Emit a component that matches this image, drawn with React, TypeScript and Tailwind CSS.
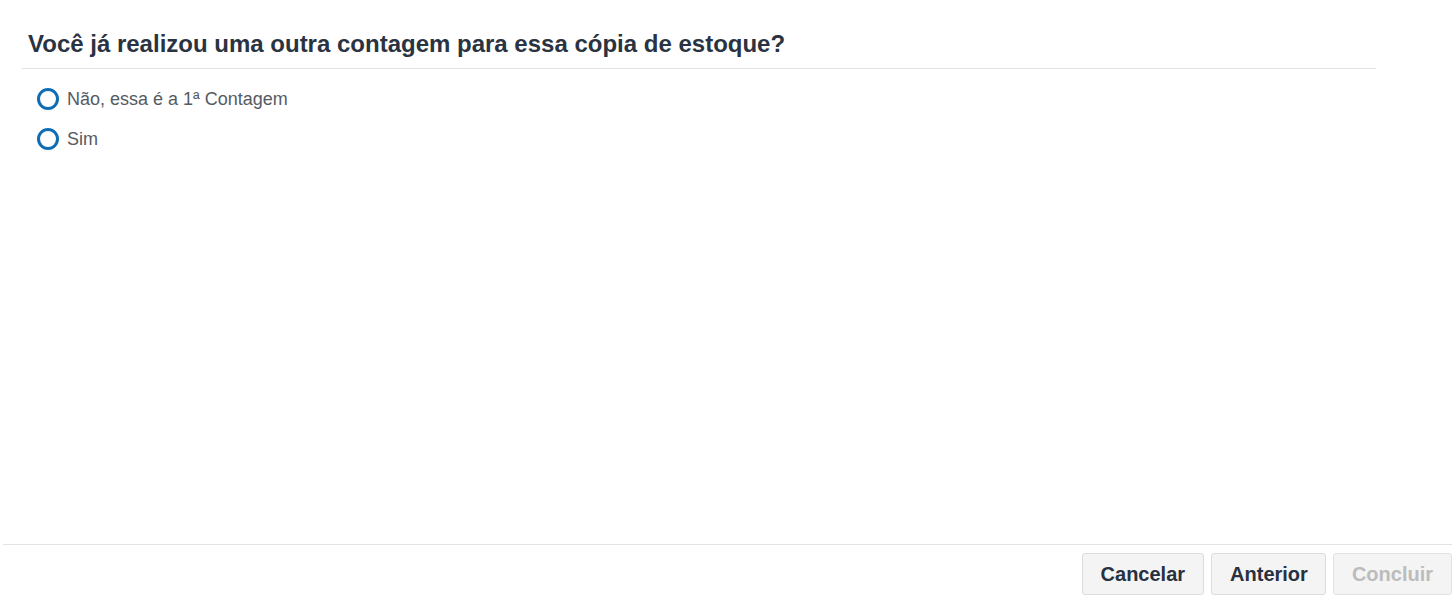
import React, { useState } from "react";

const options = [
  { id: "primeira", label: "Não, essa é a 1ª Contagem" },
  { id: "sim", label: "Sim" },
];

export default function App() {
  const [selected, setSelected] = useState<string | null>(null);

  return (
    <div className="h-[596px] w-full bg-white flex flex-col font-['Liberation_Sans',Arial,sans-serif] overflow-hidden">
      {/* QUESTION */}
      <div className="pl-[22px] pr-[79px]">
        <div className="border-b border-[#e3e3e3] pl-[6px] pt-[30px] pb-[10px]">
          <h2 className="text-[24px] leading-[28px] font-bold text-[#2a3341]">
            Você já realizou uma outra contagem para essa cópia de estoque?
          </h2>
        </div>

        <div className="pl-[15px] pt-[19px] flex flex-col gap-[18px]">
          {options.map((o) => (
            <label key={o.id} className="flex items-center gap-[8px] cursor-pointer h-[22px]">
              <span
                onClick={() => setSelected(o.id)}
                className="w-[22px] h-[22px] rounded-full border-[3px] border-[#0f6db3] flex items-center justify-center"
              >
                {selected === o.id && <span className="w-[10px] h-[10px] rounded-full bg-[#0f6db3]" />}
              </span>
              <span className="text-[18px] text-[#555b62]">{o.label}</span>
            </label>
          ))}
        </div>
      </div>

      {/* FOOTER */}
      <div className="mt-auto ml-[3px] mr-[3px] border-t border-[#e3e3e3] pt-[8px] pb-[1px] flex justify-end gap-[7px]">
        <button className="h-[42px] px-[18px] bg-[#f4f4f4] border border-[#dcdcdc] rounded-[3px] text-[20px] font-bold text-[#283140]">
          Cancelar
        </button>
        <button className="h-[42px] pl-[18px] pr-[17px] bg-[#f4f4f4] border border-[#dcdcdc] rounded-[3px] text-[20px] font-bold text-[#283140]">
          Anterior
        </button>
        <button disabled className="h-[42px] px-[18px] bg-[#f4f4f4] border border-[#e2e2e2] rounded-[3px] text-[20px] font-bold text-[#bcbcbc]">
          Concluir
        </button>
      </div>
    </div>
  );
}
